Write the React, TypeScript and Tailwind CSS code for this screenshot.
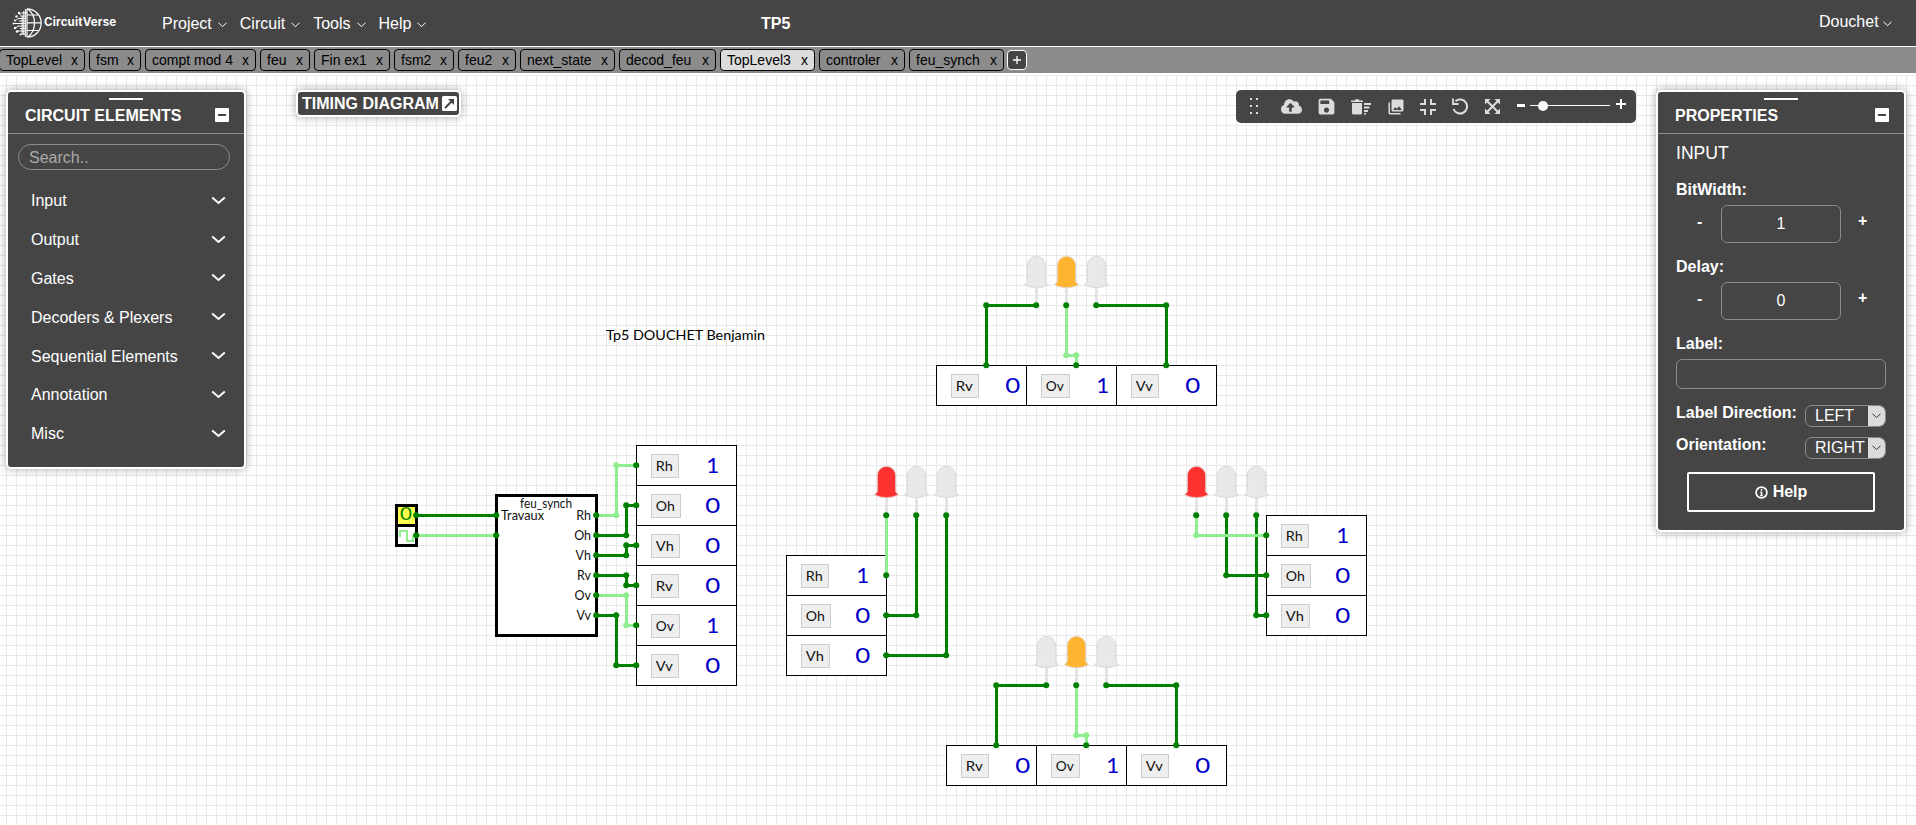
import React from "react";
import { FaCloudUploadAlt } from "react-icons/fa";
import { MdSave, MdPhotoLibrary } from "react-icons/md";

const DARK = "#008000";
const LIGHT = "#90ee90";
type Pt = [number, number];

const tabs: { name: string; w: string; active?: boolean }[] = [
  { name: "TopLevel", w: "w-[86px] -ml-px" },
  { name: "fsm", w: "w-[52px]" },
  { name: "compt mod 4", w: "w-[111px]" },
  { name: "feu", w: "w-[50px]" },
  { name: "Fin ex1", w: "w-[76px]" },
  { name: "fsm2", w: "w-[60px]" },
  { name: "feu2", w: "w-[58px]" },
  { name: "next_state", w: "w-[95px]" },
  { name: "decod_feu", w: "w-[97px]" },
  { name: "TopLevel3", w: "w-[95px]", active: true },
  { name: "controler", w: "w-[86px]" },
  { name: "feu_synch", w: "w-[95px]" },
];

const categories = ["Input", "Output", "Gates", "Decoders & Plexers", "Sequential Elements", "Annotation", "Misc"];

function Caret({ className = "" }: { className?: string }) {
  return (
    <svg width="9" height="6" viewBox="0 0 9 6" fill="none" stroke="currentColor" className={className}>
      <path d="M.5 .7 4.5 4.7 8.5 .7" />
    </svg>
  );
}

function Logo() {
  return (
    <div className="flex h-[46px] w-[150px] items-center pl-[12px]">
      <svg width="30" height="30" viewBox="0 0 30 30" fill="none" stroke="#fff" strokeWidth="1.2">
        <path d="M15 .8a14.2 14.2 0 0 1 0 28.4M15 .8v28.4M16 1c4.500 3.500 6.500 8.500 6.500 14s-2 10.500-6.500 14M15 7h11M15 14.800h14.200M15 22.500h11" />
        <path d="M13.400 1v28M11.800 3v24M10.200 8v18" strokeWidth="1" />
        <path d="M15 5H9.500L7.500 7M13 8H8M13 10.500H6L4 12.500M13 13H7M13 15.500H2M13 18H6l-2 2M13 20.500H8M13 23H5M13 26H9" strokeWidth="1" />
        <g fill="#fff" stroke="none">
          <circle cx="7" cy="5" r="1.200" /><circle cx="4.500" cy="8.500" r="1.200" /><circle cx="3" cy="12.500" r="1" />
          <circle cx="1.500" cy="15.500" r="1" /><circle cx="3" cy="20" r="1.200" /><circle cx="5" cy="23.500" r="1.200" /><circle cx="8.500" cy="26.500" r="1" />
        </g>
      </svg>
      <span className="ml-[2px] font-['Inter'] text-[11.5px] font-bold tracking-[0.2px] text-white">CircuitVerse</span>
    </div>
  );
}

function Minimize() {
  return (
    <span className="flex h-[14px] w-[14px] items-center justify-center rounded-[1px] bg-white">
      <span className="h-[2px] w-[8px] bg-[#454545]" />
    </span>
  );
}

function PanelHeader({ title }: { title: string }) {
  return (
    <div className="flex h-[42px] flex-col border-b border-[#8b8b8b] pr-[15px] pl-[17px]">
      <div className="mt-[6px] mr-[2px] h-[2px] w-[34px] shrink-0 self-center bg-white" />
      <div className="mt-[5px] flex items-center justify-between text-[16px] leading-[18px] font-bold">
        <span className="pt-[2px]">{title}</span>
        <Minimize />
      </div>
    </div>
  );
}

function Wire({ pts, on }: { pts: Pt[]; on?: boolean }) {
  const c = on ? LIGHT : DARK;
  return (
    <g>
      <polyline points={pts.map(([x, y]) => `${x + 0.5},${y + 0.5}`).join(" ")} fill="none" stroke={c} strokeWidth="3" />
      {pts.slice(1, -1).map(([x, y]) => (
        <circle key={`${x}-${y}`} cx={x + 0.2} cy={y + 0.2} r="3" fill={c} />
      ))}
      {[pts[0], pts[pts.length - 1]].map(([x, y]) => (
        <circle key={`${x}-${y}`} cx={x + 0.2} cy={y + 0.2} r="3" fill={DARK} />
      ))}
    </g>
  );
}

const labelWidth: Record<string, number> = { Rh: 27, Oh: 29, Vh: 28, Rv: 27, Ov: 28, Vv: 27 };

function Output({ x, y, label, value }: { x: number; y: number; label: string; value: number }) {
  const w = labelWidth[label];
  return (
    <g>
      <rect x={x + 0.5} y={y + 0.5} width="100" height="40" fill="#fff" stroke="#000" />
      <rect x={x + 15.5} y={y + 9.5} width={w} height="23" fill="#eee" stroke="#ccc" />
      <text x={x + 14.8 + w / 2} y={y + 26} fontSize="14" textAnchor="middle" textLength={w - 10} lengthAdjust="spacingAndGlyphs" fill="#111">{label}</text>
      <text x={x + 76.700} y={y + 28} fontSize="20.500" textAnchor="middle" textLength={value ? 13 : 15} lengthAdjust="spacingAndGlyphs" fill="#0000c8">{value}</text>
    </g>
  );
}

function Led({ x, y, color }: { x: number; y: number; color?: string }) {
  return (
    <g transform={`translate(${x + 0.5} ${y})`}>
      <path d="M0-17V-1" stroke="#e3e4e8" strokeWidth="3" />
      <path
        d="M-9.200-23V-39.500A9.200 9.200 0 0 1 9.200-39.500V-23L12-20.500Q7-17.300 0-17.300T-12-20.500Z"
        fill={color ?? "#e3e4e5"} fillOpacity={color ? 1 : 0.8} stroke={color ? "#e0d6d6" : "#d3d4d5"} strokeWidth=".8"
      />
    </g>
  );
}

function VerticalLight({ x, y }: { x: number; y: number }) {
  return (
    <g transform={`translate(${x} ${y})`}>
      <Led x={100} y={50} /><Led x={130} y={50} color="#ffb42f" /><Led x={160} y={50} />
      <Output x={0} y={110} label="Rv" value={0} />
      <Output x={90} y={110} label="Ov" value={1} />
      <Output x={180} y={110} label="Vv" value={0} />
      <Wire pts={[[100, 50], [50, 50], [50, 110]]} />
      <Wire on pts={[[130, 50], [130, 100], [140, 100], [140, 110]]} />
      <Wire pts={[[160, 50], [230, 50], [230, 110]]} />
    </g>
  );
}

const ports = ["Rh", "Oh", "Vh", "Rv", "Ov", "Vv"];

function Circuit() {
  return (
    <svg width="1916" height="752" viewBox="0 73 1916 752" className="block font-['Lato','Open_Sans',sans-serif]">
      <defs>
        <pattern id="grid" x="6" y="5" width="10" height="10" patternUnits="userSpaceOnUse">
          <path d="M.5 0V10M0 .5H10" stroke="#e9e9e9" />
        </pattern>
      </defs>
      <rect y="73" width="1916" height="752" fill="#fff" />
      <rect y="75" width="1916" height="750" fill="url(#grid)" />
      <text x="606" y="339.500" fontSize="14" textLength="159" lengthAdjust="spacingAndGlyphs">Tp5 DOUCHET Benjamin</text>

      <VerticalLight x={936} y={255} />
      <VerticalLight x={946} y={635} />

      <rect x="396.500" y="505.500" width="20" height="20" fill="#ffff4d" stroke="#000" strokeWidth="3" />
      <rect x="396.500" y="525.500" width="20" height="20" fill="#fff" stroke="#000" strokeWidth="3" />
      <text x="406" y="520" fontSize="17" textAnchor="middle" textLength="12" lengthAdjust="spacingAndGlyphs" fill={DARK}>0</text>
      <path d="M400 537V531H407V541H413V535" fill="none" stroke={LIGHT} strokeWidth="2" />

      <rect x="496.500" y="495.500" width="100" height="140" fill="#fff" stroke="#000" strokeWidth="3" />
      <g fontSize="12.5" fill="#111">
        <text x="546" y="508" textAnchor="middle" textLength="52" lengthAdjust="spacingAndGlyphs">feu_synch</text>
        <text x="501" y="520" textLength="43" lengthAdjust="spacingAndGlyphs">Travaux</text>
        {ports.map((p, i) => <text key={p} x="591" y={520 + i * 20} textAnchor="end">{p}</text>)}
      </g>
      {ports.map((p, i) => <Output key={p} x={636} y={445 + i * 40} label={p} value={i % 4 === 0 ? 1 : 0} />)}
      <Wire pts={[[416, 515], [496, 515]]} />
      <Wire on pts={[[416, 535], [496, 535]]} />
      <Wire on pts={[[596, 515], [616, 515], [616, 465], [636, 465]]} />
      <Wire pts={[[596, 535], [626, 535], [626, 505], [636, 505]]} />
      <Wire pts={[[596, 555], [626, 555], [626, 545], [636, 545]]} />
      <Wire pts={[[596, 575], [626, 575], [626, 585], [636, 585]]} />
      <Wire on pts={[[596, 595], [626, 595], [626, 625], [636, 625]]} />
      <Wire pts={[[596, 615], [616, 615], [616, 665], [636, 665]]} />

      <Led x={886} y={515} color="#ff3232" /><Led x={916} y={515} /><Led x={946} y={515} />
      {["Rh", "Oh", "Vh"].map((p, i) => <Output key={p} x={786} y={555 + i * 40} label={p} value={i ? 0 : 1} />)}
      <Wire on pts={[[886, 515], [886, 575]]} />
      <Wire pts={[[916, 515], [916, 615], [886, 615]]} />
      <Wire pts={[[946, 515], [946, 655], [886, 655]]} />

      <Led x={1196} y={515} color="#ff3232" /><Led x={1226} y={515} /><Led x={1256} y={515} />
      {["Rh", "Oh", "Vh"].map((p, i) => <Output key={p} x={1266} y={515 + i * 40} label={p} value={i ? 0 : 1} />)}
      <Wire pts={[[1226, 515], [1226, 575], [1266, 575]]} />
      <Wire pts={[[1256, 515], [1256, 615], [1266, 615]]} />
      <Wire on pts={[[1196, 515], [1196, 535], [1266, 535]]} />
    </svg>
  );
}

function Toolbar() {
  return (
    <div className="absolute top-[17px] left-[1236px] flex h-[33px] w-[400px] items-center rounded-[5px] bg-[#454545] pl-[14px] text-[#dcdcdc]">
      <svg width="8" height="17" viewBox="0 0 8 17" fill="currentColor">
        {[0, 7, 14].map((y) => <g key={y}><rect y={y} width="2" height="2" /><rect x="6" y={y} width="2" height="2" /></g>)}
      </svg>
      <FaCloudUploadAlt className="ml-[23px] h-[17px] w-[21px] shrink-0" />
      <MdSave className="ml-[14px] h-[21px] w-[21px] shrink-0" />
      <svg width="21" height="16" viewBox="0 0 21 16" fill="currentColor" className="ml-[14px] shrink-0">
        <path d="M0 1.500H3.500L4.500 .3H7.500L8.500 1.500H12V3H0ZM1 4H11V14a1.500 1.500 0 0 1-1.500 1.500H2.500A1.500 1.500 0 0 1 1 14ZM13 4H20V6H13ZM13 7.500H18.500V9.500H13ZM13 11H17V13H13ZM13 14H15V15.500H13Z" />
      </svg>
      <MdPhotoLibrary className="ml-[15px] h-[18px] w-[18px] shrink-0" />
      <svg width="16" height="16" viewBox="0 0 16 16" fill="none" stroke="currentColor" strokeWidth="2" className="ml-[15px] shrink-0">
        <path d="M0 5H5V0M11 0V5H16M0 11H5V16M11 16V11H16" />
      </svg>
      <svg width="16" height="17" viewBox="0 0 16 17" fill="none" stroke="currentColor" strokeWidth="2" className="ml-[16px] shrink-0">
        <path d="M3.500 3.200A7 7 0 1 1 1.500 11" />
        <path d="M1 .5V6H6.500" strokeWidth="1.800" />
      </svg>
      <svg width="15" height="15" viewBox="0 0 15 15" className="ml-[17px] shrink-0">
        <path d="M2 2 13 13M13 2 2 13" stroke="currentColor" strokeWidth="2" />
        <path d="M0 0H5.500L0 5.500ZM15 0V5.500L9.500 0ZM0 15V9.500L5.500 15ZM15 15H9.500L15 9.500Z" fill="currentColor" />
      </svg>
      <span className="mb-[3px] ml-[17px] h-[3px] w-[8px] bg-white" />
      <span className="mb-[2px] ml-[5px] flex h-[10px] w-[80px] items-center">
        <span className="h-px w-[8px] bg-white" />
        <span className="h-[10px] w-[10px] rounded-full bg-white" />
        <span className="h-px grow bg-white" />
      </span>
      <svg width="10" height="10" viewBox="0 0 10 10" className="mb-[5px] ml-[6px]"><path d="M5 0V10M0 5H10" stroke="#fff" strokeWidth="2" /></svg>
    </div>
  );
}

const panel = "absolute rounded-[5px] border-2 border-white bg-[#454545] text-white shadow-[0_0_10px_rgba(0,0,0,0.35)]";

function ElementsPanel() {
  return (
    <div className={panel + " top-[17px] left-[6px] h-[379px] w-[240px]"}>
      <PanelHeader title="CIRCUIT ELEMENTS" />
      <div className="mx-[10px] mt-[10px] flex h-[26px] w-[212px] items-center rounded-full border border-[#8b8b8b] pt-[2px] pl-[10px] text-[16px] text-[#aaa]">Search..</div>
      <div className="mt-[11px] pr-[18px] pl-[23px]">
        {categories.map((c) => (
          <div key={c} className="flex h-[38.800px] items-center justify-between text-[16px]">
            <span className="pt-[2px]">{c}</span>
            <svg width="15" height="9" viewBox="0 0 15 9" fill="none" stroke="#fff" strokeWidth="2"><path d="M1.200 1.500 7.500 7 13.800 1.500" /></svg>
          </div>
        ))}
      </div>
    </div>
  );
}

function Stepper({ label, value }: { label: string; value: string }) {
  return (
    <div className="h-[77px]">
      <div className="h-[24px] text-[16px] leading-[18px] font-bold">{label}</div>
      <div className="flex pl-[21px] text-[16px] font-bold">
        <span className="w-[24px] pt-[5px]">-</span>
        <span className="flex h-[38px] w-[120px] items-center justify-center rounded-[6px] border border-[#8b8b8b] font-normal">{value}</span>
        <span className="ml-[17px] pt-[4px]">+</span>
      </div>
    </div>
  );
}

function SelectRow({ label, value }: { label: string; value: string }) {
  return (
    <div className="flex h-[32px] justify-between">
      <span className="text-[16px] leading-[18px] font-bold">{label}</span>
      <span className="mt-[1px] flex h-[22px] w-[81px] overflow-hidden rounded-[7px] border border-[#8b8b8b] text-[16px] leading-[20px]">
        <span className="w-[62px] pl-[9px]">{value}</span>
        <span className="flex grow items-center justify-center bg-[#dcdcdc] text-[#333]"><Caret /></span>
      </span>
    </div>
  );
}

function PropertiesPanel() {
  return (
    <div className={panel + " top-[17px] left-[1656px] h-[442px] w-[250px]"}>
      <PanelHeader title="PROPERTIES" />
      <div className="pr-[18px] pl-[18px]">
        <div className="h-[47px] pt-[9px] text-[17.600px] leading-[20px]">INPUT</div>
        <Stepper label="BitWidth:" value="1" />
        <Stepper label="Delay:" value="0" />
        <div className="h-[24px] text-[16px] leading-[18px] font-bold">Label:</div>
        <div className="mb-[15px] h-[30px] w-[210px] rounded-[6px] border border-[#8b8b8b]" />
        <SelectRow label="Label Direction:" value="LEFT" />
        <SelectRow label="Orientation:" value="RIGHT" />
        <div className="mt-[4px] ml-[11px] flex h-[40px] w-[188px] items-center justify-center gap-[5px] rounded-[2px] border-2 border-white text-[16px] font-bold">
          <svg width="13" height="13" viewBox="0 0 13 13" fill="none" stroke="#fff" strokeWidth="1.700">
            <circle cx="6.500" cy="6.500" r="5.400" /><path d="M6.500 5.700V10M6.500 3V4.700M5.300 6.200H6.500M5.200 9.500H7.800" strokeWidth="1.500" />
          </svg>
          Help
        </div>
      </div>
    </div>
  );
}

export default function App() {
  return (
    <div className="h-[825px] w-[1916px] overflow-hidden bg-white font-['Liberation_Sans',Arial,sans-serif]">
      <header className="flex h-[46px] items-center bg-[#454545] text-[16px] text-white">
        <Logo />
        <nav className="flex w-[611px] pt-[2px] pl-[12px]">
          {["Project", "Circuit", "Tools", "Help"].map((m) => (
            <span key={m} className="mr-[13px] flex items-center">{m}<Caret className="mt-[2px] ml-[6px]" /></span>
          ))}
        </nav>
        <span className="w-[1058px] pt-[2px] font-bold">TP5</span>
        <span className="mb-[2px] flex items-center">Douchet<Caret className="mt-[4px] ml-[4px]" /></span>
      </header>
      <div className="flex h-[27px] items-center gap-[4px] border-t border-white bg-[#8b8b8b] text-[14px]">
        {tabs.map((t) => (
          <div key={t.name} className={"flex h-[22px] shrink-0 items-center justify-between rounded-[4px] border border-black pr-[6px] pl-[6px] " + t.w + (t.active ? " bg-[#dcdcdc]" : "")}>
            <span>{t.name}</span>
            <span>x</span>
          </div>
        ))}
        <div className="-ml-px flex h-[20px] w-[20px] items-center justify-center rounded-[4px] border border-white bg-[#454545] text-white">
          <svg width="8" height="8" viewBox="0 0 8 8"><path d="M4 0V8M0 4H8" stroke="#fff" strokeWidth="1.300" /></svg>
        </div>
      </div>
      <main className="relative h-[752px]">
        <Circuit />
        <ElementsPanel />
        <div className={panel + " top-[17px] left-[296px] flex h-[27px] w-[165px] items-center gap-[5px] pl-[4px] text-[16px] font-bold whitespace-nowrap"}>
          <span className="w-[135px]">TIMING DIAGRAM</span>
          <svg width="15" height="15" viewBox="0 0 15 15" className="shrink-0">
            <rect width="15" height="15" rx="1.500" fill="#fff" />
            <path d="M3 12 10.500 4.500" stroke="#454545" strokeWidth="2" /><path d="M6 3H12V9Z" fill="#454545" />
          </svg>
        </div>
        <Toolbar />
        <PropertiesPanel />
      </main>
    </div>
  );
}
